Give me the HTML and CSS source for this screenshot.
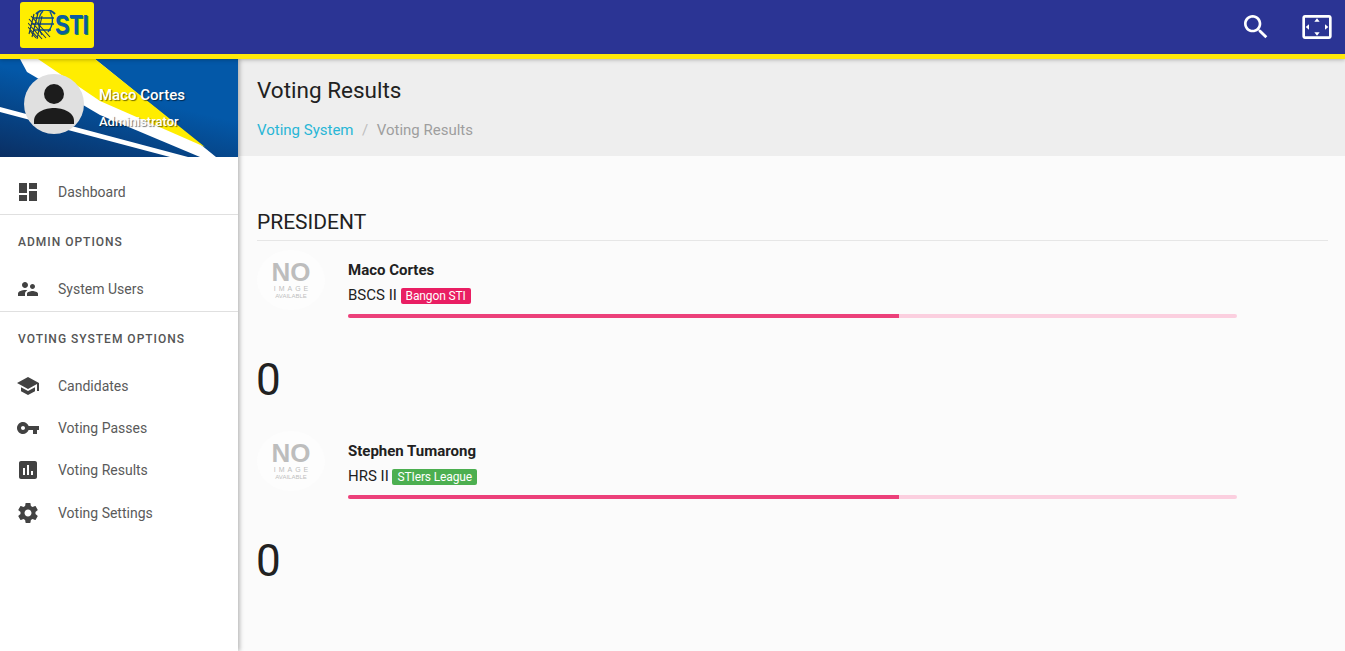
FILE: index.html
```html
<!DOCTYPE html>
<html lang="en">
<head>
<meta charset="utf-8">
<title>Voting Results</title>
<link rel="stylesheet" href="styles.css">
</head>
<body>
<header class="topbar">
  <div class="logo">
    <svg class="logo-globe" viewBox="0 0 28 30">
      <g fill="none" stroke="#0f4d8c" stroke-width="1.3">
        <path d="M8 4a13 13 0 0 1 19 0" stroke-width="2"/>
        <path d="M15 1c-5 5-6 16-1 24M22 2c4 6 3 14-2 20"/>
        <path d="M5 8h21M3 14h23M5 20h18"/>
      </g>
      <g fill="none" stroke="#16385c" stroke-width="1.1">
        <path d="M0 17l10 11M0 13l14 16M1 9l17 19M3 6l19 21M2 21l6 7M6 4l-5 20M10 3L4 27M14 6L9 29"/>
      </g>
    </svg>
    <span class="logo-text">STI</span>
  </div>
  <div class="top-actions">
    <svg class="top-icon" viewBox="0 0 24 24"><path d="M15.5 14h-.79l-.28-.27C15.41 12.59 16 11.11 16 9.5 16 5.91 13.09 3 9.5 3S3 5.91 3 9.5 5.91 16 9.5 16c1.61 0 3.09-.59 4.23-1.57l.27.28v.79l5 4.99L20.49 19l-4.99-5zm-6 0C7.01 14 5 11.99 5 9.5S7.01 5 9.5 5 14 7.01 14 9.5 11.99 14 9.5 14z"/></svg>
    <svg class="top-icon" viewBox="0 0 24 24"><path d="M12.01 5.5L10 8h4l-1.99-2.5zM18 10v4l2.5-1.99L18 10zM6 10l-2.5 2.01L6 14v-4zm8 6h-4l2.01 2.5L14 16zm7-13H3c-1.1 0-2 .9-2 2v14c0 1.1.9 2 2 2h18c1.1 0 2-.9 2-2V5c0-1.1-.9-2-2-2zm0 16.01H3V4.99h18v14.02z"/></svg>
  </div>
</header>
<div class="main">
  <aside class="sidebar">
    <div class="user">
      <svg class="user-bg" viewBox="0 0 238 98" preserveAspectRatio="none">
        <defs>
          <linearGradient id="bl" x1="0" y1="1" x2="0.4" y2="0.3"><stop offset="0" stop-color="#0a2f63"/><stop offset="1" stop-color="#0358a8"/></linearGradient>
        </defs>
        <rect width="238" height="98" fill="url(#bl)"/>
        <polygon points="20,0 95,0 216,98 200,98 100,56 27,13" fill="#fff"/>
        <polygon points="38,0 95,0 205,88 100,42" fill="#ffed00"/>
        <polygon points="0,48 0,53 170,98 188,98" fill="#fff"/>
      </svg>
      <div class="avatar">
        <svg viewBox="0 0 60 60"><circle cx="30" cy="20" r="10"/><path d="M10 50v-3c0-9 11-13 20-13s20 4 20 13v3z"/></svg>
      </div>
      <div class="user-info">
        <div class="user-name">Maco Cortes</div>
        <div class="user-role">Administrator</div>
      </div>
    </div>
    <nav class="nav">
      <a class="nav-item ruled">
        <svg class="nav-icon" viewBox="0 0 24 24"><path d="M3 13h8V3H3v10zm0 8h8v-6H3v6zm10 0h8V11h-8v10zm0-18v6h8V3h-8z"/></svg>
        <span>Dashboard</span>
      </a>
      <div class="nav-head">ADMIN OPTIONS</div>
      <a class="nav-item ruled">
        <svg class="nav-icon" viewBox="0 0 24 24"><path d="M16.5 12c1.38 0 2.49-1.12 2.49-2.5S17.88 7 16.5 7C15.12 7 14 8.12 14 9.5s1.12 2.5 2.5 2.5zM9 11c1.66 0 2.99-1.34 2.99-3S10.66 5 9 5C7.34 5 6 6.34 6 8s1.34 3 3 3zm7.5 3c-1.83 0-5.5.92-5.5 2.75V19h11v-2.25c0-1.83-3.67-2.75-5.5-2.75zM9 13c-2.33 0-7 1.17-7 3.5V19h7v-2.25c0-.85.33-2.34 2.37-3.47C10.5 13.1 9.66 13 9 13z"/></svg>
        <span>System Users</span>
      </a>
      <div class="nav-head">VOTING SYSTEM OPTIONS</div>
      <a class="nav-item">
        <svg class="nav-icon" viewBox="0 0 24 24"><path d="M5 13.18v4L12 21l7-3.82v-4L12 17l-7-3.82zM12 3L1 9l11 6 9-4.91V17h2V9L12 3z"/></svg>
        <span>Candidates</span>
      </a>
      <a class="nav-item">
        <svg class="nav-icon" viewBox="0 0 24 24"><path d="M12.65 10C11.83 7.67 9.61 6 7 6c-3.31 0-6 2.69-6 6s2.69 6 6 6c2.61 0 4.83-1.67 5.65-4H17v4h4v-4h2v-4H12.65zM7 14c-1.1 0-2-.9-2-2s.9-2 2-2 2 .9 2 2-.9 2-2 2z"/></svg>
        <span>Voting Passes</span>
      </a>
      <a class="nav-item">
        <svg class="nav-icon" viewBox="0 0 24 24"><path d="M19 3H5c-1.1 0-2 .9-2 2v14c0 1.1.9 2 2 2h14c1.1 0 2-.9 2-2V5c0-1.1-.9-2-2-2zM9 17H7v-7h2v7zm4 0h-2V7h2v10zm4 0h-2v-4h2v4z"/></svg>
        <span>Voting Results</span>
      </a>
      <a class="nav-item">
        <svg class="nav-icon" viewBox="0 0 24 24"><path d="M19.43 12.98c.04-.32.07-.64.07-.98s-.03-.66-.07-.98l2.11-1.65c.19-.15.24-.42.12-.64l-2-3.46c-.12-.22-.39-.3-.61-.22l-2.49 1c-.52-.4-1.08-.73-1.69-.98l-.38-2.65C14.46 2.18 14.25 2 14 2h-4c-.25 0-.46.18-.49.42l-.38 2.65c-.61.25-1.17.59-1.69.98l-2.49-1c-.23-.09-.49 0-.61.22l-2 3.46c-.13.22-.07.49.12.64l2.11 1.65c-.04.32-.07.65-.07.98s.03.66.07.98l-2.11 1.65c-.19.15-.24.42-.12.64l2 3.46c.12.22.39.3.61.22l2.49-1c.52.4 1.08.73 1.69.98l.38 2.65c.03.24.24.42.49.42h4c.25 0 .46-.18.49-.42l.38-2.65c.61-.25 1.17-.59 1.69-.98l2.49 1c.23.09.49 0 .61-.22l2-3.46c.12-.22.07-.49-.12-.64l-2.11-1.65zM12 15.5c-1.93 0-3.5-1.57-3.5-3.5s1.57-3.5 3.5-3.5 3.5 1.57 3.5 3.5-1.57 3.5-3.5 3.5z"/></svg>
        <span>Voting Settings</span>
      </a>
    </nav>
  </aside>
  <main class="content">
    <div class="page-head">
      <h1 class="page-title">Voting Results</h1>
      <div class="crumbs"><a class="crumb-link">Voting System</a><span class="crumb-sep">/</span><span>Voting Results</span></div>
    </div>
    <section class="results">
      <h2 class="position">PRESIDENT</h2>
      <div class="candidate">
        <div class="noimg"><span class="no">NO</span><span class="img">IMAGE</span><span class="avail">AVAILABLE</span></div>
        <div class="cand-body">
          <div class="cand-name">Maco Cortes</div>
          <div class="cand-meta">BSCS II <span class="badge pink">Bangon STI</span></div>
          <div class="bar"><div class="bar-fill"></div></div>
        </div>
      </div>
      <div class="count">0</div>
      <div class="candidate">
        <div class="noimg"><span class="no">NO</span><span class="img">IMAGE</span><span class="avail">AVAILABLE</span></div>
        <div class="cand-body">
          <div class="cand-name">Stephen Tumarong</div>
          <div class="cand-meta">HRS II <span class="badge green">STIers League</span></div>
          <div class="bar"><div class="bar-fill"></div></div>
        </div>
      </div>
      <div class="count">0</div>
    </section>
  </main>
</div>
</body>
</html>
```
FILE: styles.css
```css
* { box-sizing: border-box; }
html, body { height: 100%; }
body {
  margin: 0;
  overflow: hidden;
  font-family: Roboto, "Liberation Sans", sans-serif;
  color: #212121;
  background: #fbfbfb;
  display: flex;
  flex-direction: column;
}
.topbar {
  flex: none;
  height: 59px;
  background: #2b3494;
  border-bottom: 5px solid #ffe90a;
  display: flex;
  align-items: flex-start;
  justify-content: space-between;
  padding: 2px 12px 0 20px;
  box-shadow: 0 1px 4px rgba(0,0,0,.25);
  position: relative;
  z-index: 3;
}
.logo {
  width: 74px;
  height: 46px;
  background: #ffee00;
  border-radius: 3px;
  display: flex;
  align-items: center;
  padding-left: 8px;
}
.logo-globe { width: 28px; height: 30px; flex: none; }
.logo-text {
  margin-left: -1px;
  font: bold 27px/1 "Liberation Sans", sans-serif;
  color: #0b5aa5;
  text-shadow: 1px 1px 0 #1d8a4a;
  transform: scaleX(.8);
  transform-origin: left center;
}
.top-actions { display: flex; align-items: center; gap: 29px; height: 50px; }
.top-icon { width: 32px; height: 32px; fill: #fff; }
.main { flex: 1; display: flex; min-height: 0; }
.sidebar {
  flex: none;
  width: 238px;
  background: #fff;
  box-shadow: 2px 0 4px rgba(0,0,0,.25);
  position: relative;
  z-index: 2;
}
.user {
  position: relative;
  height: 98px;
  display: flex;
  align-items: flex-start;
  padding: 15px 0 0 24px;
  overflow: hidden;
}
.user-bg { position: absolute; inset: 0; width: 100%; height: 100%; }
.avatar {
  position: relative;
  width: 60px;
  height: 60px;
  border-radius: 50%;
  background: #e0e0e0;
  flex: none;
}
.avatar svg { display: block; width: 60px; height: 60px; fill: #1c1c1c; }
.user-info { position: relative; margin-left: 15px; color: #fff; text-shadow: 1px 1px 1px rgba(0,0,0,.55); font-weight: 500; }
.user-name { font-size: 15px; line-height: 18px; margin-top: 12px; }
.user-role { font-size: 13px; line-height: 16px; margin-top: 10px; }
.nav { padding-top: 14px; }
.nav-item {
  display: flex;
  align-items: center;
  height: 42px;
  padding-left: 16px;
  font-size: 14px;
  color: #5a5a5a;
}
.nav-item:last-child { margin-top: 1px; }
.nav-item.ruled { height: 44px; padding-bottom: 2px; border-bottom: 1px solid #e0e0e0; }
.nav-icon { width: 24px; height: 24px; fill: #424242; flex: none; margin-right: 18px; }
.nav-head {
  height: 53px;
  line-height: 53px;
  padding: 1px 0 0 18px;
  font-size: 12px;
  font-weight: 500;
  letter-spacing: 1px;
  color: #555555;
}
.content { flex: 1; min-width: 0; }
.page-head {
  height: 97px;
  background: #eeeeee;
  padding: 17px 18px 0 19px;
}
.page-title { margin: 0; font-size: 22.5px; font-weight: 400; line-height: 29px; color: #212121; }
.crumbs { margin-top: 15px; font-size: 15px; line-height: 20px; color: #9e9e9e; }
.crumb-link { color: #29b6d6; }
.crumb-sep { margin: 0 8.5px; color: #bdbdbd; }
.results { padding: 53px 17px 0 19px; }
.position {
  margin: 0;
  font-size: 21px;
  font-weight: 400;
  line-height: 26px;
  padding-bottom: 5px;
  border-bottom: 1px solid #e6e6e6;
  color: #212121;
}
.candidate { display: flex; padding-top: 9px; }
.noimg {
  flex: none;
  width: 68px;
  height: 60px;
  border-radius: 50%;
  background: #fdfdfd;
  margin-right: 23px;
  display: flex;
  flex-direction: column;
  align-items: center;
  padding-top: 11px;
  color: #bdbdbd;
}
.no { font: bold 26px/23px "Liberation Sans", sans-serif; }
.img { font: 7px/9px "Liberation Sans", sans-serif; letter-spacing: 3px; margin-right: -3px; }
.avail { font: 6px/7px "Liberation Sans", sans-serif; }
.cand-body { width: 889px; padding-top: 11px; }
.cand-name { font-size: 15px; font-weight: 700; line-height: 18px; color: #212121; }
.cand-meta { font-size: 15px; line-height: 20px; margin-top: 6px; color: #212121; }
.badge {
  display: inline-block;
  font-size: 12px;
  letter-spacing: -.12px;
  line-height: 16px;
  padding: 0 5px;
  border-radius: 2px;
  color: #fff;
}
.pink { background: #e91e63; }
.green { background: #4caf50; }
.bar { height: 4px; margin-top: 9px; background: #fbcfdf; border-radius: 2px; overflow: hidden; }
.bar-fill { width: 62%; height: 100%; background: #ec407a; }
.count { font-size: 44px; line-height: 54px; margin: 35px 0 14.5px -1px; color: #212121; }
```
